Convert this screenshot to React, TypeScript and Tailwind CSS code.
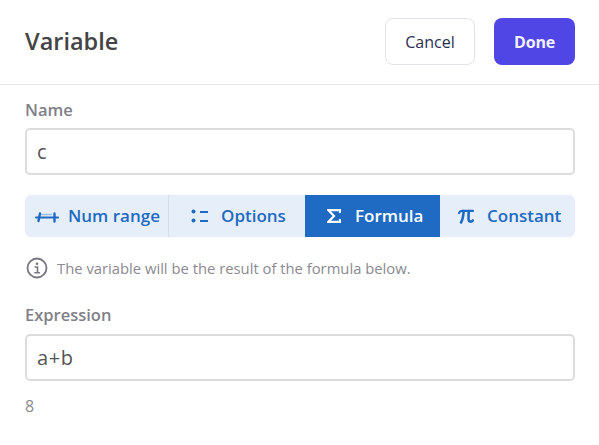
import React from 'react'

const FONT = "font-['Open_Sans','Noto_Sans',sans-serif]"

function RangeIcon() {
  return (
    <svg width="24" height="14" viewBox="0 0 24 14" fill="none" className="shrink-0">
      <path d="M1 8.500h22" stroke="#1f6ac2" strokeWidth="2" strokeLinecap="round" />
      <path d="M5 4.500L3.500 12M19.500 4.500v8" stroke="#1f6ac2" strokeWidth="2.400" strokeLinecap="round" />
      <path d="M6 5.500h11" stroke="#9dbfe6" strokeWidth="1.500" />
    </svg>
  )
}

function OptionsIcon() {
  return (
    <svg width="18" height="14" viewBox="0 0 18 14" fill="none" className="shrink-0">
      <circle cx="2.500" cy="2.500" r="2" fill="#1f6ac2" />
      <circle cx="2.500" cy="11.500" r="2" fill="#1f6ac2" />
      <path d="M9 3h8M9 12h8" stroke="#1f6ac2" strokeWidth="2" />
    </svg>
  )
}

function SigmaIcon() {
  return (
    <svg width="14" height="14" viewBox="0 0 14 14" fill="none" className="shrink-0">
      <path d="M13 4V1.200H1.500L7 7l-5.500 5.800H13V10" stroke="#ffffff" strokeWidth="2.200" />
    </svg>
  )
}

function PiIcon() {
  return (
    <svg width="16" height="15" viewBox="0 0 16 15" fill="none" className="shrink-0">
      <path d="M1 4c.6-1.600 1.600-2.200 3-2.200h11" stroke="#1f6ac2" strokeWidth="2.200" strokeLinecap="round" />
      <path d="M5.600 2C5.400 7 4.600 10.800 3 13.500" stroke="#1f6ac2" strokeWidth="2.600" strokeLinecap="round" />
      <path d="M10.800 2c-.3 4-.4 6.500-.2 8.500.2 2.200 2.500 3 4.200 1" stroke="#1f6ac2" strokeWidth="2.600" strokeLinecap="round" />
    </svg>
  )
}

function InfoIcon() {
  return (
    <svg width="22" height="22" viewBox="0 0 22 22" fill="none" className="shrink-0">
      <circle cx="11" cy="11" r="9.500" stroke="#77777f" strokeWidth="1.800" />
      <circle cx="11" cy="6.800" r="1.300" fill="#77777f" />
      <path d="M8.500 10h3v5.500M8.300 15.700h5.600" stroke="#77777f" strokeWidth="1.600" />
    </svg>
  )
}

export default function App() {
  return (
    <div className={`${FONT} w-[599px] h-[445px] bg-white overflow-hidden`}>
      {/* Header */}
      <div className="h-[85px] flex items-center justify-between pl-[25px] pr-6 pb-[1px] border-b border-[#e8e8e8]">
        <h1 className="text-[23.500px] font-semibold text-[#444444]">Variable</h1>
        <div className="flex gap-[19px]">
          <button className="w-[90px] h-[47px] rounded-lg border border-[#e2e3ea] bg-white text-[16px] font-medium text-[#2a2f55]">
            Cancel
          </button>
          <button className="w-[81px] h-[47px] rounded-lg bg-[#5046e5] text-[16px] font-bold tracking-[-0.2px] text-[#f2f1ff]">
            Done
          </button>
        </div>
      </div>

      <div className="pl-[25px] pr-6 pt-[13px]">
        {/* Name */}
        <div className="text-[16.500px] leading-[24px] font-semibold text-[#808088]">Name</div>
        <div className="mt-[6px] h-[47px] flex items-center px-[10px] rounded-[5px] border-2 border-[#dcdcdc] text-[20px] text-[#555555]">
          c
        </div>

        {/* Type tabs */}
        <div className="mt-5 h-[42px] flex rounded-md overflow-hidden bg-[#e6eff9] text-[17px] font-semibold text-[#1f6ac2]">
          <div className="w-[144px] flex items-center gap-[9px] pl-[10px] border-r border-[#d5dee8]">
            <RangeIcon />
            Num range
          </div>
          <div className="w-[136px] flex items-center gap-[12px] pl-[22px]">
            <OptionsIcon />
            Options
          </div>
          <div className="w-[135px] flex items-center gap-[14px] pl-[22px] bg-[#1f6ac2] text-white">
            <SigmaIcon />
            Formula
          </div>
          <div className="flex-1 flex items-center gap-[13px] pl-[18px]">
            <PiIcon />
            Constant
          </div>
        </div>

        {/* Hint */}
        <div className="mt-[20px] flex items-center gap-[9px] h-[22px] pl-[1px] text-[14.800px] text-[#8a8a91]">
          <InfoIcon />
          The variable will be the result of the formula below.
        </div>

        {/* Expression */}
        <div className="mt-[24px] text-[16.500px] leading-[24px] font-semibold text-[#808088]">Expression</div>
        <div className="mt-[7px] h-[47px] flex items-center px-[10px] rounded-[5px] border-2 border-[#dcdcdc] text-[20px] tracking-[0.6px] text-[#555555]">
          a+b
        </div>
        <div className="mt-[13px] text-[16px] leading-[24px] text-[#8a8a91]">8</div>
      </div>
    </div>
  )
}
